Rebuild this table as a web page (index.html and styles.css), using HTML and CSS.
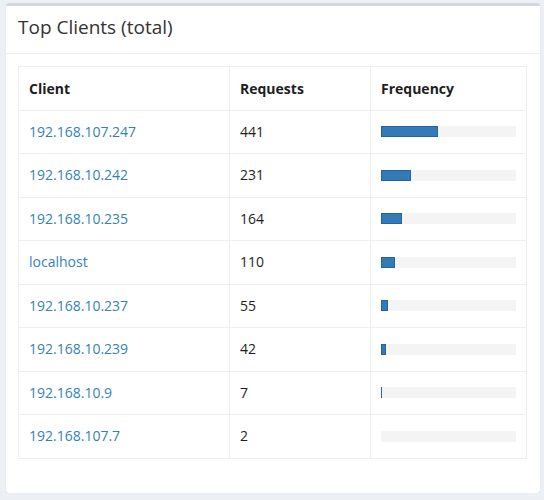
FILE: index.html
```html
<!DOCTYPE html>
<html>
<head>
<meta charset="utf-8">
<link rel="stylesheet" href="styles.css">
</head>
<body>
<div class="box">
  <div class="box-header"><h3 class="box-title">Top Clients (total)</h3></div>
  <div class="box-body">
    <table class="clients">
      <colgroup><col class="c1"><col class="c2"><col class="c3"></colgroup>
      <thead>
        <tr><th>Client</th><th>Requests</th><th>Frequency</th></tr>
      </thead>
      <tbody>
        <tr><td><a href="#">192.168.107.247</a></td><td>441</td><td><div class="track"><div class="bar" style="width:41.92%"></div></div></td></tr>
        <tr><td><a href="#">192.168.10.242</a></td><td>231</td><td><div class="track"><div class="bar" style="width:21.96%"></div></div></td></tr>
        <tr><td><a href="#">192.168.10.235</a></td><td>164</td><td><div class="track"><div class="bar" style="width:15.59%"></div></div></td></tr>
        <tr><td><a href="#">localhost</a></td><td>110</td><td><div class="track"><div class="bar" style="width:10.46%"></div></div></td></tr>
        <tr><td><a href="#">192.168.10.237</a></td><td>55</td><td><div class="track"><div class="bar" style="width:5.23%"></div></div></td></tr>
        <tr><td><a href="#">192.168.10.239</a></td><td>42</td><td><div class="track"><div class="bar" style="width:3.99%"></div></div></td></tr>
        <tr><td><a href="#">192.168.10.9</a></td><td>7</td><td><div class="track"><div class="bar" style="width:0.67%"></div></div></td></tr>
        <tr><td><a href="#">192.168.107.7</a></td><td>2</td><td><div class="track"><div class="bar" style="width:0%"></div></div></td></tr>
      </tbody>
    </table>
  </div>
</div>
</body>
</html>
```
FILE: styles.css
```css
html, body {
  margin: 0;
  padding: 0;
  background: #ecf0f5;
}
body {
  padding: 3px 4px 0 6px;
  font-family: "Open Sans", "Liberation Sans", sans-serif;
  font-size: 14px;
  color: #333;
}
.box {
  background: #fff;
  border-top: 3px solid #d2d6de;
  border-radius: 3px;
  box-shadow: 0 1px 1px rgba(0, 0, 0, 0.12);
  height: 490px;
  box-sizing: border-box;
}
.box-header {
  padding: 12px 12px 16px;
  border-bottom: 1px solid #f0f0f0;
}
.box-title {
  margin: 0;
  font-size: 19px;
  line-height: 19px;
  font-weight: 400;
  color: #333;
}
.box-body {
  padding: 12px 13px 0 12px;
}
.clients {
  width: 100%;
  border-collapse: collapse;
  table-layout: fixed;
}
.clients .c1 { width: 211px; }
.clients .c2 { width: 141px; }
.clients th,
.clients td {
  border: 1px solid #efefef;
  padding: 10px 10px;
  line-height: 22.5px;
  text-align: left;
  vertical-align: middle;
}
.clients th {
  font-weight: 700;
  color: #1e1e1e;
  padding-top: 11px;
  padding-bottom: 9px;
}
.clients td {
  color: #1e1e1e;
}
.clients a {
  color: #3482ba;
  text-decoration: none;
}
.track {
  height: 11px;
  background: #f4f4f4;
  display: flex;
}
.bar {
  height: 100%;
  background: #337ab7;
  box-shadow: inset 0 0 0 1px #2263a0;
}
```
